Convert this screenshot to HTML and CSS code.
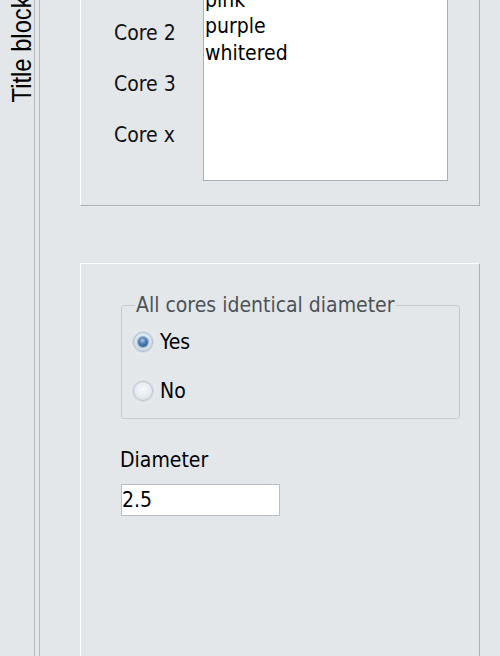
FILE: index.html
```html
<!DOCTYPE html>
<html>
<head>
<meta charset="utf-8">
<link rel="stylesheet" href="styles.css">
</head>
<body>
<div class="app">
  <aside class="sidebar"><div class="tab">Title block</div></aside>
  <div class="divider"></div>
  <main class="content">
    <section class="panel panel-top">
      <div class="labels">
        <div class="lbl">Core 2</div>
        <div class="lbl">Core 3</div>
        <div class="lbl">Core x</div>
      </div>
      <div class="listbox">
        <div class="item">pink</div>
        <div class="item">purple</div>
        <div class="item">whitered</div>
      </div>
    </section>
    <section class="panel panel-bottom">
      <fieldset class="group">
        <legend class="legend">All cores identical diameter</legend>
        <div class="options">
          <label class="opt"><span class="radio radio-on"><span class="dot"></span></span>Yes</label>
          <label class="opt"><span class="radio"></span>No</label>
        </div>
      </fieldset>
      <div class="field-label">Diameter</div>
      <div class="input">2.5</div>
    </section>
  </main>
</div>
</body>
</html>
```
FILE: styles.css
```css
html, body {
  margin: 0;
  padding: 0;
}
body {
  width: 500px;
  height: 656px;
  overflow: hidden;
  background: #e3e7ea;
  font-family: "DejaVu Sans Condensed", "DejaVu Sans", sans-serif;
  font-stretch: condensed;
  font-size: 21px;
  color: #111;
}
.app {
  display: flex;
  height: 656px;
}
.sidebar {
  width: 25px;
  padding-left: 9px;
  flex-shrink: 0;
  border-right: 1px solid #b3bbc3;
}
.tab {
  writing-mode: vertical-rl;
  transform: rotate(180deg) scaleY(0.88);
  height: 109px;
  font-family: "Liberation Sans", Arial, sans-serif;
  font-stretch: normal;
  font-size: 27px;
  line-height: 27px;
  white-space: nowrap;
  color: #000;
}
.divider {
  width: 4px;
  flex-shrink: 0;
  border-right: 1px solid #b3bbc3;
}
.content {
  flex: 1;
  padding-left: 40px;
}
.panel {
  width: 400px;
  box-sizing: border-box;
  border: 1px solid;
  border-color: #ffffff #a9b1b9 #a9b1b9 #ffffff;
}
.panel-top {
  margin-top: -40px;
  height: 246px;
  display: flex;
  align-items: flex-start;
}
.labels {
  width: 89px;
  padding-left: 33px;
  padding-top: 47px;
  display: flex;
  flex-direction: column;
}
.lbl {
  line-height: 51px;
  white-space: nowrap;
}
.listbox {
  margin-top: 20px;
  width: 245px;
  height: 200px;
  box-sizing: border-box;
  border: 1px solid #a7b0b9;
  background: #fff;
  padding: 4.5px 0 0 1px;
}
.item {
  line-height: 26.5px;
  color: #000;
}
.panel-bottom {
  margin-top: 57px;
  height: 460px;
  border-bottom: none;
}
.group {
  margin: 29px 0 0 40px;
  width: 339px;
  box-sizing: border-box;
  border: 1px solid #c4cad0;
  border-radius: 3px;
  padding: 10px 11px 12px 11px;
  min-width: 0;
}
.legend {
  padding: 0 1px;
  margin-left: 2px;
  line-height: 24px;
  color: #4c5258;
  white-space: nowrap;
}
.options {
  display: flex;
  flex-direction: column;
  gap: 19px;
}
.opt {
  display: flex;
  align-items: center;
  gap: 7px;
  height: 30px;
  color: #000;
}
.radio {
  width: 18px;
  height: 18px;
  border-radius: 50%;
  border: 1px solid #b9c3cd;
  background: radial-gradient(circle at 50% 40%, #f7f9fb 0%, #e4e9ee 60%, #cdd4db 100%);
  box-shadow: 0 0 0 1.5px #d9e0e7, 0 0 2px 2px #eef2f5;
  display: flex;
  align-items: center;
  justify-content: center;
  flex-shrink: 0;
}
.radio-on {
  border-color: #a9bbcf;
  background: radial-gradient(circle at 50% 40%, #eef3f8 0%, #d8e2ec 60%, #c2cfdc 100%);
}
.dot {
  width: 10px;
  height: 10px;
  border-radius: 50%;
  background: radial-gradient(circle at 45% 35%, #a9c8ea 0%, #4f7db2 40%, #23497a 100%);
  box-shadow: 0 0 1px 1px #8aa9cc;
}
.field-label {
  margin: 29px 0 0 39px;
  line-height: 24px;
  color: #000;
}
.input {
  margin: 12px 0 0 40px;
  width: 159px;
  height: 32px;
  box-sizing: border-box;
  border: 1px solid #b7bec5;
  background: #fff;
  line-height: 30px;
  padding-left: 0;
  color: #000;
}
```
